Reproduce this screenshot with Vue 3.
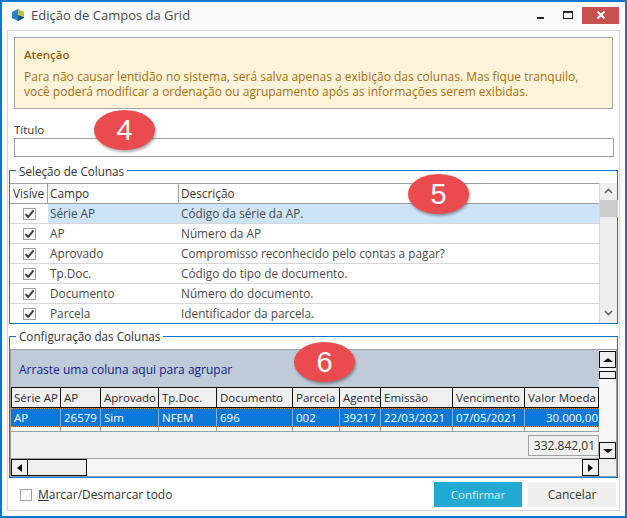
<script setup>
const rows = [
  ['Série AP', 'Código da série da AP.'],
  ['AP', 'Número da AP'],
  ['Aprovado', 'Compromisso reconhecido pelo contas a pagar?'],
  ['Tp.Doc.', 'Código do tipo de documento.'],
  ['Documento', 'Número do documento.'],
  ['Parcela', 'Identificador da parcela.'],
]
const cols = [
  { t: 'Série AP', w: 50, v: 'AP' },
  { t: 'AP', w: 40, v: '26579' },
  { t: 'Aprovado', w: 58, v: 'Sim' },
  { t: 'Tp.Doc.', w: 58, v: 'NFEM' },
  { t: 'Documento', w: 76, v: '696' },
  { t: 'Parcela', w: 47, v: '002' },
  { t: 'Agente', w: 41, v: '39217' },
  { t: 'Emissão', w: 72, v: '22/03/2021' },
  { t: 'Vencimento', w: 72, v: '07/05/2021' },
  { t: 'Valor Moeda', w: 74, v: '30.000,00', right: true },
]
</script>

<template>
  <div class="win">
    <header class="title">
      <svg class="logo" width="12" height="12" viewBox="0 0 12 12">
        <polygon points="6,0 0,3 0,9 6,12 6,6" fill="#1e86c6" />
        <polygon points="6,0 12,3 12,8 6,6" fill="#b7c53c" />
        <polygon points="6,6 12,8 12,9 6,12" fill="#0f5674" />
      </svg>
      <span class="title-text">Edição de Campos da Grid</span>
      <div class="controls">
        <span class="min"></span>
        <span class="max"></span>
        <span class="close">
          <svg width="10" height="8" viewBox="0 0 10 8"><path d="M1.5 .5 L8.5 7.5 M8.5 .5 L1.5 7.5" stroke="#fff" stroke-width="2" /></svg>
        </span>
      </div>
    </header>

    <div class="panel">
      <div class="alert">
        <strong>Atenção</strong>
        <p>Para não causar lentidão no sistema, será salva apenas a exibição das colunas. Mas fique tranquilo,<br />você poderá modificar a ordenação ou agrupamento após as informações serem exibidas.</p>
      </div>

      <label class="field-label">Título</label>
      <div class="input"></div>

      <section class="group g1">
        <h3>Seleção de Colunas</h3>
        <div class="list">
          <div class="list-main">
            <div class="list-head">
              <span class="c-a">Visíve</span>
              <span class="c-b">Campo</span>
              <span class="c-c">Descrição</span>
            </div>
            <div v-for="(r, i) in rows" :key="r[0]" class="list-row" :class="{ sel: i === 0 }">
              <span class="c-a">
                <span class="check">
                  <svg width="11" height="10" viewBox="0 0 11 10"><path d="M1.5 5 L4.2 8 L9.5 1.5" fill="none" stroke="#444" stroke-width="2" /></svg>
                </span>
              </span>
              <span class="c-b">{{ r[0] }}</span>
              <span class="c-c">{{ r[1] }}</span>
            </div>
          </div>
          <div class="vbar">
            <svg width="9" height="6" viewBox="0 0 9 6"><path d="M1 5 L4.5 1.5 L8 5" fill="none" stroke="#666" stroke-width="1.6" /></svg>
            <span class="thumb"></span>
            <svg class="down" width="9" height="6" viewBox="0 0 9 6"><path d="M1 1 L4.5 4.5 L8 1" fill="none" stroke="#666" stroke-width="1.6" /></svg>
          </div>
        </div>
      </section>

      <section class="group g2">
        <h3>Configuração das Colunas</h3>
        <div class="grid">
          <div class="grid-main">
            <div class="band">Arraste uma coluna aqui para agrupar</div>
            <div class="ghead">
              <span v-for="c in cols" :key="c.t" :style="{ width: c.w + 'px' }">{{ c.t }}</span>
            </div>
            <div class="grow">
              <span v-for="c in cols" :key="c.t" :class="{ r: c.right }" :style="{ width: c.w + 'px' }">{{ c.v }}</span>
            </div>
            <div class="gstub">
              <span v-for="c in cols" :key="c.t" :style="{ width: c.w + 'px' }"></span>
            </div>
            <div class="gfoot"><span class="total">332.842,01</span></div>
            <div class="hbar">
              <span class="sq"><i class="tri-l"></i></span>
              <span class="hthumb"></span>
              <span class="hrest"></span>
              <span class="sq"><i class="tri-r"></i></span>
            </div>
          </div>
          <div class="gv">
            <span class="sq tall"><i class="tri-u"></i></span>
            <span class="vthumb"></span>
            <span class="vrest"></span>
            <span class="sq tall"><i class="tri-d"></i></span>
            <span class="corner"></span>
          </div>
        </div>
      </section>

      <footer class="foot">
        <span class="box"></span>
        <span class="all"><u>M</u>arcar/Desmarcar todo</span>
        <button class="ok">Confirmar</button>
        <button class="no">Cancelar</button>
      </footer>

      <span class="pin p4">4</span>
      <span class="pin p5">5</span>
      <span class="pin p6">6</span>
    </div>
  </div>
</template>

<style>
html, body { margin: 0; background: #fff; }
</style>

<style scoped>
.win {
  width: 627px; height: 518px; box-sizing: border-box;
  border: 2px solid #0a78d0; background: #fafafa;
  font-family: "Open Sans", "Noto Sans", sans-serif; font-size: 11.5px; color: #333;
  display: flex; flex-direction: column; overflow: hidden;
}
.title { height: 26px; padding-bottom: 2px; flex: none; display: flex; align-items: center; padding-left: 10px; }
.logo { margin-right: 7px; }
.title-text { font-size: 13px; color: #4a4a4a; }
.controls { margin-left: auto; display: flex; align-items: center; height: 17px; margin-right: 6px; }
.min { width: 7px; height: 2px; background: #222; margin-top: 5px; margin-right: 19px; }
.max { width: 8px; height: 5px; border: 1px solid #222; border-top-width: 2px; margin-right: 9px; margin-top: -1px; }
.close { width: 37px; height: 17px; background: #c75050; display: flex; align-items: center; justify-content: center; }
.panel {
  position: relative; flex: 1; margin: 0 5px 5px 5px; background: #fff;
  border: 1px solid #d6d6d6; padding: 6px 0 0 0;
  display: flex; flex-direction: column; box-sizing: border-box;
}
.alert {
  height: 72px; box-sizing: border-box; margin: 0 0 0 6px; width: 599px; border: 1px solid #a3a3a3;
  background: #fff3d9; color: #a86f10; padding: 9px 9px 0 9px; flex: none;
}
.alert strong { display: block; font-weight: 600; font-size: 11.5px; line-height: 16px; color: #8f6010; }
.alert p { margin: 6px 0 0; line-height: 15px; font-size: 12px; white-space: nowrap; }
.field-label { margin: 13px 0 0 6px; line-height: 16px; color: #333; font-size: 11.5px; }
.input { height: 17px; margin: 0 0 0 6px; width: 598px; border: 1px solid #a0a0a0; flex: none; }
.group { position: relative; border: 1px solid #0a78d0; flex: none; margin-left: 1px; width: 609px; box-sizing: border-box; }
.group h3 {
  position: absolute; top: -8px; left: 6px; margin: 0; padding: 0 3px; background: #fff;
  font-weight: 400; font-size: 11.7px; line-height: 16px; color: #333;
}
.g1 { height: 154px; margin-top: 13px; padding-top: 12px; }
.list { display: flex; height: 140px; font-size: 11.8px; }
.list-main { flex: 1; min-width: 0; }
.list-head { display: flex; height: 19px; border-top: 1px solid #a0a0a0; border-bottom: 1px solid #a0a0a0; line-height: 19px; }
.list-row { display: flex; height: 19px; border-bottom: 1px solid #d6d6d6; line-height: 19px; color: #4a4a4a; }
.list-row:last-child { border-bottom: 0; }
.c-a { width: 38px; flex: none; box-sizing: border-box; overflow: hidden; display: flex; align-items: center; justify-content: center; }
.list-head span { border-right: 1px solid #a0a0a0; }
.list-head .c-a { justify-content: flex-start; padding-left: 3px; }
.list-head .c-c { border-right: 0; }
.c-b { width: 131px; flex: none; padding-left: 2px; box-sizing: border-box; }
.c-c { flex: 1; padding-left: 2px; }
.sel .c-b, .sel .c-c { background: #cde4f7; }
.check { width: 11px; height: 10px; border: 1px solid #a0a0a0; display: flex; align-items: center; justify-content: center; }
.vbar { width: 18px; flex: none; background: #efefef; border-left: 1px solid #d6d6d6; display: flex; flex-direction: column; align-items: center; padding-top: 5px; box-sizing: border-box; }
.vbar .thumb { width: 18px; height: 17px; background: #cdcdcd; margin-top: 6px; }
.vbar .down { margin-top: auto; margin-bottom: 7px; }
.g2 { height: 142px; margin-top: 12px; padding: 12px 0 0 0; }
.g2 h3 { top: -9px; }
.grid { display: flex; height: 128px; border: 1px solid #a0a0a0; border-bottom-color: #7f9cb8; box-sizing: border-box; }
.grid-main { width: 588px; flex: none; display: flex; flex-direction: column; overflow: hidden; }
.band { height: 37px; background: #bfcbd8; color: #141a8c; padding-left: 8px; line-height: 39px; flex: none; font-size: 12px; }
.ghead { display: flex; height: 21px; flex: none; }
.ghead span { flex: none; box-sizing: border-box; border: 1px solid #111; border-left-width: 0; background: #f0f0f0; padding-left: 3px; line-height: 19px; white-space: nowrap; overflow: hidden; color: #2a2a2a; }
.ghead span:first-child { border-left-width: 1px; padding-left: 2px; }
.grow { display: flex; height: 17px; background: #0a78d7; flex: none; border-top: 1px dotted #e08a3a; border-bottom: 1px dotted #e08a3a; }
.grow span { flex: none; box-sizing: border-box; color: #fff; padding-left: 3px; line-height: 17px; border-right: 1px solid #7fb2de; white-space: nowrap; }
.grow .r { text-align: right; padding: 0 1px 0 0; border: 0; }
.gstub { display: flex; height: 4px; flex: none; border-bottom: 1px solid #a0a0a0; }
.gstub span { flex: none; box-sizing: border-box; border-right: 1px solid #a0a0a0; }
.gfoot { height: 26px; background: #f0f0f0; border-bottom: 1px solid #a0a0a0; position: relative; flex: none; }
.total { position: absolute; right: 0; top: 3px; width: 71px; height: 21px; box-sizing: border-box; border: 1px solid #a0a0a0; text-align: right; padding-right: 3px; line-height: 19px; font-size: 12px; }
.hbar { display: flex; height: 17px; flex: none; background: #f7f7f7; }
.sq { width: 17px; height: 17px; box-sizing: border-box; border: 1px solid #111; background: #f0f0f0; display: flex; align-items: center; justify-content: center; flex: none; }
.hthumb { width: 59px; flex: none; box-sizing: border-box; border: 1px solid #111; border-left: 0; background: #f0f0f0; }
.hrest { flex: 1; }
.tri-l { border: 4px solid transparent; border-right: 5px solid #111; border-left: 0; }
.tri-r { border: 4px solid transparent; border-left: 5px solid #111; border-right: 0; }
.tri-u { border: 4px solid transparent; border-bottom: 4px solid #111; border-top: 0; border-left-width: 5px; border-right-width: 5px; }
.tri-d { border: 4px solid transparent; border-top: 4px solid #111; border-bottom: 0; border-left-width: 5px; border-right-width: 5px; }
.gv { flex: 1; display: flex; flex-direction: column; background: #f7f7f7; padding-top: 1px; }
.sq.tall { width: 100%; height: 17px; }
.vthumb { height: 8px; box-sizing: border-box; border: 1px solid #111; background: #f0f0f0; margin-top: 3px; flex: none; }
.vrest { flex: 1; }
.corner { height: 17px; background: #f0f0f0; flex: none; }
.foot { display: flex; align-items: center; height: 25px; margin-top: 4px; padding-left: 12px; padding-right: 3px; position: relative; }
.box { width: 10px; height: 10px; border: 1px solid #a0a0a0; margin-right: 6px; }
.all { color: #333; font-size: 12px; }
button { border: 0; font: inherit; height: 25px; cursor: default; padding: 0; }
.ok { width: 88px; background: #22a9d2; color: #d9eef5; margin-left: auto; }
.no { width: 88px; background: #efefef; color: #333; margin-left: 6px; font-size: 12px; }
.pin {
  position: absolute; display: flex; align-items: center; justify-content: center;
  width: 61px; height: 40px; border-radius: 50%; background: #ea4b4e; color: #fff;
  font-family: "Liberation Sans", sans-serif; font-size: 29px;
  box-shadow: 1px 2px 3px rgba(0,0,0,.35);
}
.p4 { left: 86px; top: 79px; }
.p5 { left: 400px; top: 143px; }
.p6 { left: 286px; top: 311px; }
</style>
